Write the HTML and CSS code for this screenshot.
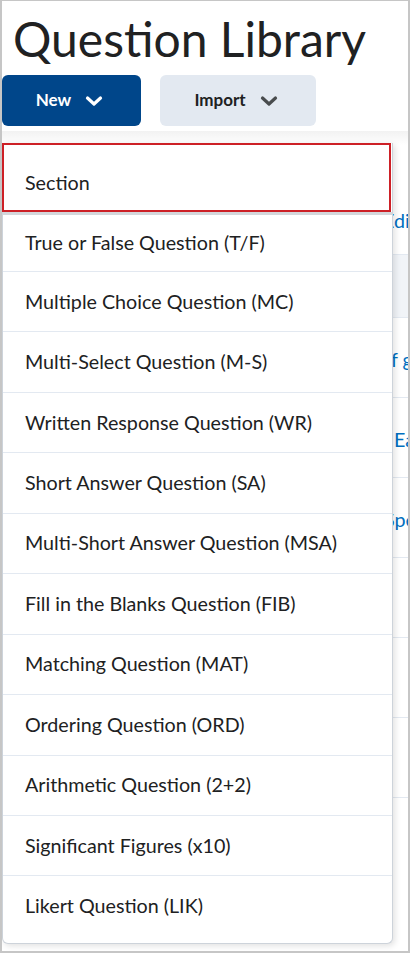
FILE: index.html
```html
<!DOCTYPE html>
<html lang="en">
<head>
<meta charset="utf-8">
<title>Question Library</title>
<link rel="stylesheet" href="styles.css">
</head>
<body>
<div class="frame">
  <h1 class="title">Question Library</h1>
  <div class="toolbar">
    <button class="btn btn-primary">New
      <svg class="chev" viewBox="0 0 18 12" width="18" height="12"><path d="M2.5 3 L9 9 L15.5 3" fill="none" stroke="currentColor" stroke-width="3.2" stroke-linecap="round" stroke-linejoin="round"/></svg>
    </button>
    <button class="btn btn-secondary">Import
      <svg class="chev" viewBox="0 0 18 12" width="18" height="12"><path d="M2.5 3 L9 9 L15.5 3" fill="none" stroke="currentColor" stroke-width="3.2" stroke-linecap="round" stroke-linejoin="round"/></svg>
    </button>
  </div>
  <div class="content">
    <div class="table">
      <div class="row row-actions"><span class="link">Edit</span></div>
      <div class="row row-head"></div>
      <div class="row row-b"><span class="link">of grade</span></div>
      <div class="row row-c"><span class="link">Easy</span></div>
      <div class="row row-d"><span class="link">Speed</span></div>
      <div class="row"></div>
      <div class="row"></div>
      <div class="row"></div>
      <div class="row"></div>
    </div>
    <ul class="menu">
      <li class="item item-focus">Section</li>
      <li class="item">True or False Question (T/F)</li>
      <li class="item">Multiple Choice Question (MC)</li>
      <li class="item">Multi-Select Question (M-S)</li>
      <li class="item">Written Response Question (WR)</li>
      <li class="item">Short Answer Question (SA)</li>
      <li class="item">Multi-Short Answer Question (MSA)</li>
      <li class="item">Fill in the Blanks Question (FIB)</li>
      <li class="item">Matching Question (MAT)</li>
      <li class="item">Ordering Question (ORD)</li>
      <li class="item">Arithmetic Question (2+2)</li>
      <li class="item">Significant Figures (x10)</li>
      <li class="item">Likert Question (LIK)</li>
    </ul>
  </div>
</div>
</body>
</html>
```
FILE: styles.css
```css
* { box-sizing: border-box; }
html, body { margin: 0; padding: 0; background: #c8c8c8; }
body { font-family: Lato, "Open Sans", sans-serif; color: #202122; }

.frame {
  width: 410px;
  height: 953px;
  background: #fff;
  border-style: solid;
  border-color: #c6c6c6;
  border-width: 1px 2px 2px 2px;
  overflow: hidden;
  display: flex;
  flex-direction: column;
}

.title {
  margin: 0;
  padding: 8px 0 0 11px;
  height: 74px;
  font-size: 48px;
  font-weight: 400;
  line-height: 60px;
  color: #202122;
}

.toolbar {
  display: flex;
  gap: 19px;
  height: 51px;
}

.btn {
  display: flex;
  align-items: center;
  justify-content: center;
  gap: 14px;
  height: 51px;
  border: none;
  border-radius: 6px;
  font-family: Lato, "Open Sans", sans-serif;
  font-size: 17px;
  font-weight: 700;
  padding: 0 0 2px 0;
}
.btn-primary { width: 139px; background: #00468a; color: #fff; padding-right: 4px; }
.btn-secondary { width: 156px; background: #e3e9f1; color: #202122; padding-right: 4px; }
.btn-secondary .chev { color: #494c4e; }
.chev { margin-top: 3px; }

.content {
  position: relative;
  flex: 1;
  margin-top: 5px;
}

.table {
  display: flex;
  flex-direction: column;
  background: linear-gradient(#f2f2f2, #fff 14px);
}
.row {
  height: 80px;
  border-top: 1px solid #e3e9f1;
  padding-left: 378px;
  padding-top: 4px;
  display: flex;
  align-items: center;
  font-size: 19.7px;
  white-space: nowrap;
}
.row-actions { height: 123px; border-top: none; align-items: flex-end; padding: 0 0 22px 381px; }
.row-head { height: 63px; background: #f1f4f8; }
.row-c { padding-left: 392px; }
.row-d { padding-left: 382px; }
.link { color: #006fbf; }

.menu {
  position: absolute;
  top: 12px;
  left: 0;
  width: 391px;
  margin: 0;
  padding: 0 0 7px 0;
  list-style: none;
  background: #fff;
  border: 1px solid #cdd3da;
  border-top: none;
  border-radius: 0 0 6px 6px;
  box-shadow: 2px 2px 6px rgba(0, 0, 0, 0.12);
}
.item {
  height: 60.45px;
  border-top: 1px solid #e3e9f1;
  display: flex;
  align-items: center;
  padding: 0 0 1px 22px;
  font-size: 19.7px;
  color: #202122;
  white-space: nowrap;
}
.item-focus {
  height: 69px;
  border: 2px solid #cd2026;
  padding-top: 10px;
  padding-left: 21px;
  margin-right: 1px;
  margin-left: -1px;
}
.item-focus + .item { border-top: 3px solid #d4d7db; height: 59px; }
```
